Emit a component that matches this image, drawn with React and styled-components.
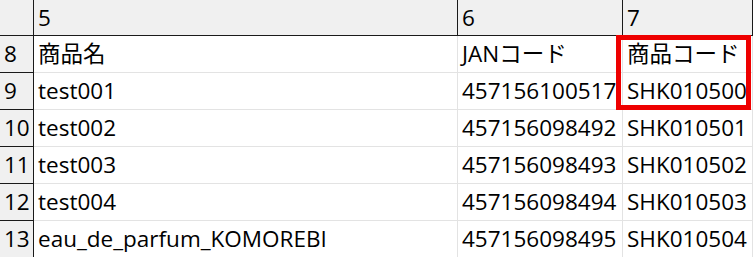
import React from 'react'
import styled, { createGlobalStyle } from 'styled-components'

const GlobalStyle = createGlobalStyle`
  html, body {
    margin: 0;
    padding: 0;
    background: #ffffff;
  }
  body {
    font-family: "Open Sans", "Noto Sans CJK JP", sans-serif;
    color: #000;
  }
`

const columns = ['5', '6', '7']

const rows = [
  { num: 8, cells: ['商品名', 'JANコード', '商品コード'] },
  { num: 9, cells: ['test001', '457156100517', 'SHK010500'] },
  { num: 10, cells: ['test002', '457156098492', 'SHK010501'] },
  { num: 11, cells: ['test003', '457156098493', 'SHK010502'] },
  { num: 12, cells: ['test004', '457156098494', 'SHK010503'] },
  { num: 13, cells: ['eau_de_parfum_KOMOREBI', '457156098495', 'SHK010504'] },
]

export default function App() {
  return (
    <>
      <GlobalStyle />
      <Sheet>
        <HeaderRow>
          <Corner />
          {columns.map((c) => (
            <ColHead key={c}>{c}</ColHead>
          ))}
        </HeaderRow>
        {rows.map((r) => (
          <Row key={r.num}>
            <RowHead>{r.num}</RowHead>
            {r.cells.map((text, i) => (
              <Cell key={i}>{text}</Cell>
            ))}
          </Row>
        ))}
        <Highlight />
      </Sheet>
    </>
  )
}

const Sheet = styled.div`
  position: relative;
  width: 753px;
  height: 257px;
  overflow: hidden;
  font-size: 22.5px;
  line-height: 1;
`

const gridCols = `
  display: grid;
  grid-template-columns: 34px 424px 165px 1fr;
`

const HeaderRow = styled.div`
  ${gridCols}
  height: 36px;
  background: #f0f0f0;
  border-bottom: 1px solid #1a1a1a;
  box-sizing: border-box;
`

const Corner = styled.div`
  border-right: 1px solid #1a1a1a;
`

const ColHead = styled.div`
  display: flex;
  align-items: center;
  padding-left: 4px;
  border-right: 1px solid #1a1a1a;
  white-space: nowrap;
  padding-top: 1px;
`

const Row = styled.div`
  ${gridCols}
  height: 37px;
`

const RowHead = styled.div`
  display: flex;
  align-items: center;
  padding-left: 4px;
  background: #f0f0f0;
  border-right: 1px solid #1a1a1a;
  border-bottom: 1px solid #1a1a1a;
  box-sizing: border-box;
  padding-top: 1px;
`

const Cell = styled.div`
  display: flex;
  align-items: center;
  padding-left: 4px;
  border-right: 1px solid #e3e3e3;
  border-bottom: 1px solid #e3e3e3;
  box-sizing: border-box;
  white-space: nowrap;
  overflow: hidden;
  padding-top: 1px;
`

const Highlight = styled.div`
  position: absolute;
  left: 616px;
  top: 35px;
  width: 135px;
  height: 75px;
  border: 5px solid #ee0000;
  box-sizing: border-box;
  pointer-events: none;
`
